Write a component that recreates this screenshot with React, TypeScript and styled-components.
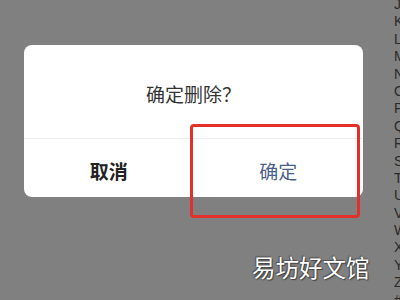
import React from 'react';
import styled, { createGlobalStyle } from 'styled-components';

const GlobalStyle = createGlobalStyle`
  html, body {
    margin: 0;
    padding: 0;
    width: 400px;
    height: 300px;
    overflow: hidden;
    font-family: "Noto Sans CJK SC", "Noto Sans", sans-serif;
  }
`;

const Page = styled.div`
  position: relative;
  width: 400px;
  height: 300px;
  background: #808080;
  overflow: hidden;
  display: flex;
  justify-content: flex-end;
`;

const IndexBar = styled.div`
  display: flex;
  flex-direction: column;
  width: 6px;
  margin-top: -4px;
  overflow: hidden;
`;

const IndexLetter = styled.span`
  display: block;
  height: 17.4px;
  line-height: 17.4px;
  font-family: "Liberation Sans", Arial, sans-serif;
  font-size: 14px;
  color: #2a2a2a;
  white-space: nowrap;
`;

const Overlay = styled.div`
  position: absolute;
  inset: 0;
  padding: 45px 37px 0 24px;
`;

const Dialog = styled.div`
  background: #fff;
  border-radius: 8px;
  overflow: hidden;
`;

const Title = styled.div`
  height: 94px;
  display: flex;
  align-items: center;
  justify-content: center;
  font-size: 19px;
  color: #333;
  border-bottom: 1px solid #ececec;
  padding-top: 3px;
  box-sizing: border-box;
`;

const Actions = styled.div`
  display: grid;
  grid-template-columns: 1fr 1fr;
  height: 58px;
`;

const ActionButton = styled.button<{ primary?: boolean }>`
  border: none;
  background: transparent;
  font-family: inherit;
  font-size: 19px;
  padding: 5px 0 0;
  font-weight: ${p => (p.primary ? 400 : 700)};
  color: ${p => (p.primary ? '#4c5f8c' : '#222')};
`;

const Highlight = styled.div`
  position: absolute;
  left: 190px;
  top: 124px;
  width: 170px;
  height: 94px;
  box-sizing: border-box;
  border: 3px solid #e3302a;
  border-radius: 4px;
`;

const Watermark = styled.div`
  position: absolute;
  left: 252px;
  top: 250px;
  font-size: 23.5px;
  color: #fff;
  text-shadow: 0 0 1px #333, 1px 1px 1px #444, -1px -1px 1px #555;
`;

const letters = ['J', 'K', 'L', 'M', 'N', 'O', 'P', 'Q', 'R', 'S', 'T', 'U', 'V', 'W', 'X', 'Y', 'Z', '#'];

export default function App() {
  return (
    <>
      <GlobalStyle />
      <Page>
        <IndexBar>
          {letters.map(l => (
            <IndexLetter key={l}>{l}</IndexLetter>
          ))}
        </IndexBar>
        <Overlay>
          <Dialog>
            <Title>确定删除？</Title>
            <Actions>
              <ActionButton>取消</ActionButton>
              <ActionButton primary>确定</ActionButton>
            </Actions>
          </Dialog>
        </Overlay>
        <Highlight />
        <Watermark>易坊好文馆</Watermark>
      </Page>
    </>
  );
}
